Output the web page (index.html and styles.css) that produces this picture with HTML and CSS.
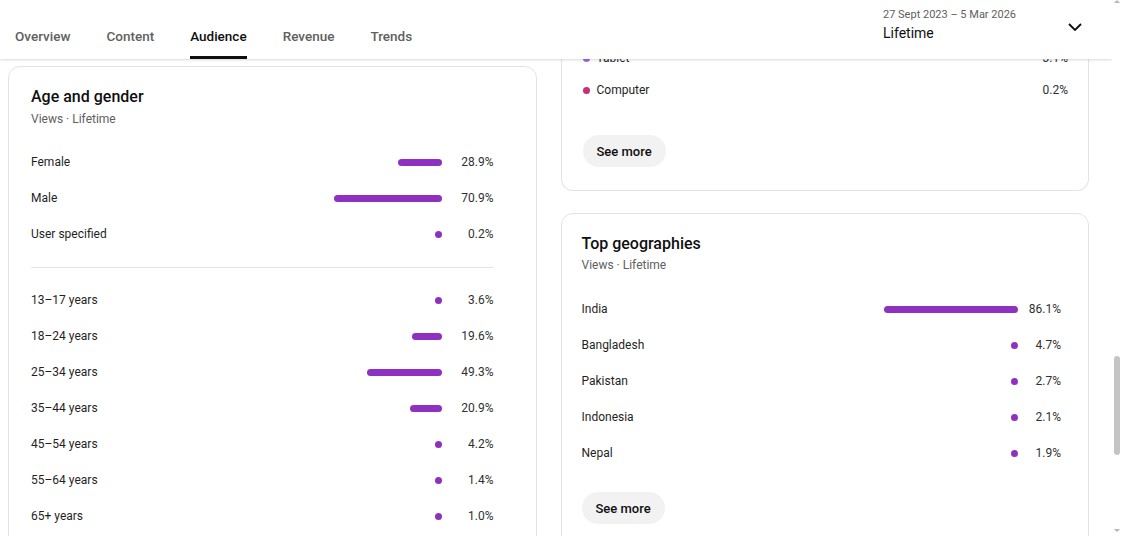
FILE: index.html
```html
<!DOCTYPE html>
<html lang="en">
<head>
<meta charset="utf-8">
<title>Audience</title>
<link rel="stylesheet" href="styles.css">
</head>
<body>
<div class="app">
  <div class="page">
    <header class="topbar">
      <nav class="tabs">
        <span class="tab">Overview</span>
        <span class="tab">Content</span>
        <span class="tab tab-active">Audience</span>
        <span class="tab">Revenue</span>
        <span class="tab">Trends</span>
      </nav>
      <div class="range">
        <div class="range-text">
          <div class="range-dates">27 Sept 2023 – 5 Mar 2026</div>
          <div class="range-label">Lifetime</div>
        </div>
        <svg class="chevron" width="14" height="8" viewBox="0 0 14 8"><polyline points="1,1 7,7 13,1" fill="none" stroke="#0f0f0f" stroke-width="1.8"/></svg>
      </div>
    </header>
    <main class="content">
      <div class="col">
        <section class="card card-age">
          <h2 class="card-title">Age and gender</h2>
          <div class="card-sub">Views · Lifetime</div>
          <div class="rows">
            <div class="row"><span class="label">Female</span><span class="bar" style="width:44px"></span><span class="pct">28.9%</span></div>
            <div class="row"><span class="label">Male</span><span class="bar" style="width:108px"></span><span class="pct">70.9%</span></div>
            <div class="row"><span class="label">User specified</span><span class="bar" style="width:7px"></span><span class="pct">0.2%</span></div>
          </div>
          <div class="divider"></div>
          <div class="rows rows-age">
            <div class="row"><span class="label">13–17 years</span><span class="bar" style="width:7px"></span><span class="pct">3.6%</span></div>
            <div class="row"><span class="label">18–24 years</span><span class="bar" style="width:30px"></span><span class="pct">19.6%</span></div>
            <div class="row"><span class="label">25–34 years</span><span class="bar" style="width:75px"></span><span class="pct">49.3%</span></div>
            <div class="row"><span class="label">35–44 years</span><span class="bar" style="width:32px"></span><span class="pct">20.9%</span></div>
            <div class="row"><span class="label">45–54 years</span><span class="bar" style="width:7px"></span><span class="pct">4.2%</span></div>
            <div class="row"><span class="label">55–64 years</span><span class="bar" style="width:7px"></span><span class="pct">1.4%</span></div>
            <div class="row"><span class="label">65+ years</span><span class="bar" style="width:7px"></span><span class="pct">1.0%</span></div>
          </div>
        </section>
      </div>
      <div class="col col-right">
        <section class="card card-device">
          <div class="legend">
            <div class="legend-row"><span class="dot dot-tablet"></span><span class="label">Tablet</span><span class="pct">3.1%</span></div>
            <div class="legend-row"><span class="dot dot-computer"></span><span class="label">Computer</span><span class="pct">0.2%</span></div>
          </div>
          <button class="see-more see-more-device">See more</button>
        </section>
        <section class="card card-geo">
          <h2 class="card-title">Top geographies</h2>
          <div class="card-sub">Views · Lifetime</div>
          <div class="rows">
            <div class="row"><span class="label">India</span><span class="bar" style="width:134px"></span><span class="pct">86.1%</span></div>
            <div class="row"><span class="label">Bangladesh</span><span class="bar" style="width:7px"></span><span class="pct">4.7%</span></div>
            <div class="row"><span class="label">Pakistan</span><span class="bar" style="width:7px"></span><span class="pct">2.7%</span></div>
            <div class="row"><span class="label">Indonesia</span><span class="bar" style="width:7px"></span><span class="pct">2.1%</span></div>
            <div class="row"><span class="label">Nepal</span><span class="bar" style="width:7px"></span><span class="pct">1.9%</span></div>
          </div>
          <button class="see-more see-more-geo">See more</button>
        </section>
      </div>
    </main>
  </div>
  <div class="scrollbar">
    <span class="sb-up"></span>
    <span class="sb-thumb"></span>
    <span class="sb-down"></span>
  </div>
</div>
</body>
</html>
```

FILE: styles.css
```css
* { box-sizing: border-box; }
html, body { margin: 0; padding: 0; }
body {
  font-family: Roboto, "Noto Sans", Arial, sans-serif;
  color: #0f0f0f;
  background: #fff;
  overflow: hidden;
}
.app {
  display: flex;
  height: 536px;
  width: 1121px;
}
.page {
  flex: 1;
  display: flex;
  flex-direction: column;
  overflow: hidden;
  min-width: 0;
}
.topbar {
  flex: 0 0 59px;
  height: 59px;
  display: flex;
  justify-content: space-between;
  background: #fff;
  position: relative;
  z-index: 2;
  box-shadow: 0 1px 2px rgba(0,0,0,0.10), 0 2px 3px rgba(0,0,0,0.04);
}
.tabs {
  display: flex;
  gap: 36px;
  padding-left: 15px;
}
.tab {
  height: 59px;
  padding-top: 26px;
  font-size: 13.5px;
  line-height: 20px;
  font-weight: 500;
  color: #606060;
  border-bottom: 3px solid transparent;
}
.tab-active {
  color: #0f0f0f;
  border-bottom-color: #0f0f0f;
}
.range {
  display: flex;
  padding-top: 7px;
  padding-right: 30px;
}
.range-text {
  width: 185px;
}
.range-dates {
  font-size: 11px;
  line-height: 16px;
  color: #606060;
}
.range-label {
  font-size: 14px;
  line-height: 20px;
  color: #0f0f0f;
}
.chevron {
  margin-top: 16px;
}
.content {
  flex: 1;
  overflow: hidden;
  display: grid;
  grid-template-columns: 1fr 1fr;
  column-gap: 24px;
  align-items: start;
  padding: 7px 23px 0 8px;
}
.col {
  display: flex;
  flex-direction: column;
  gap: 22px;
}
.col-right {
  margin-top: -67px;
}
.card {
  border: 1px solid #e3e3e3;
  border-radius: 12px;
  background: #fff;
}
.card-title {
  margin: 0;
  font-size: 16px;
  line-height: 22px;
  font-weight: 500;
  color: #0f0f0f;
}
.card-sub {
  font-size: 12px;
  line-height: 16px;
  color: #606060;
}
.card-age {
  padding: 19px 42px 40px 22px;
}
.card-age .card-sub { margin-top: 3px; }
.card-age .rows { margin-top: 17px; }
.card-age .rows-age { margin-top: 0; }
.card-age .pct { width: 52px; }
.rows {
  display: flex;
  flex-direction: column;
}
.row {
  height: 36px;
  display: flex;
  align-items: center;
}
.label {
  flex: 1;
  font-size: 12px;
  line-height: 16px;
  color: #1f1f1f;
}
.bar {
  height: 7px;
  border-radius: 4px;
  background: #8e30c0;
}
.pct {
  font-size: 12px;
  line-height: 16px;
  color: #303030;
  text-align: right;
}
.divider {
  height: 1px;
  background: #e5e5e5;
  margin: 15px 0 14px;
}
.card-device {
  border-top: 0;
  border-radius: 0 0 12px 12px;
  padding: 43px 20px 23px 21px;
}
.legend {
  display: flex;
  flex-direction: column;
}
.legend-row {
  height: 32px;
  display: flex;
  align-items: center;
}
.dot {
  width: 7px;
  height: 7px;
  border-radius: 50%;
  margin-right: 7px;
}
.dot-tablet { background: #a567dc; }
.dot-computer { background: #c2307e; }
.see-more {
  display: block;
  height: 32px;
  padding: 0 14px;
  border: 0;
  border-radius: 16px;
  background: #f2f2f2;
  font-family: Roboto, "Noto Sans", Arial, sans-serif;
  font-size: 13px;
  font-weight: 500;
  color: #0f0f0f;
}
.see-more-device { margin-top: 29px; }
.card-geo {
  padding: 19px 27px 40px 20px;
}
.card-geo .card-sub { margin-top: 2px; }
.card-geo .rows { margin-top: 18px; }
.card-geo .pct { width: 43px; }
.see-more-geo { margin-top: 21px; }
.scrollbar {
  flex: 0 0 9px;
  width: 9px;
  display: flex;
  flex-direction: column;
  align-items: center;
  background: #fff;
}
.sb-up {
  width: 0;
  height: 0;
  border-left: 3px solid transparent;
  border-right: 3px solid transparent;
  border-bottom: 3px solid #b5b5b5;
}
.sb-thumb {
  width: 6px;
  height: 99px;
  border-radius: 3px;
  background: #c4c4c4;
  margin-top: 353px;
}
.sb-down {
  width: 0;
  height: 0;
  border-left: 3px solid transparent;
  border-right: 3px solid transparent;
  border-top: 3px solid #b5b5b5;
  margin-top: auto;
  margin-bottom: 4px;
}
```
